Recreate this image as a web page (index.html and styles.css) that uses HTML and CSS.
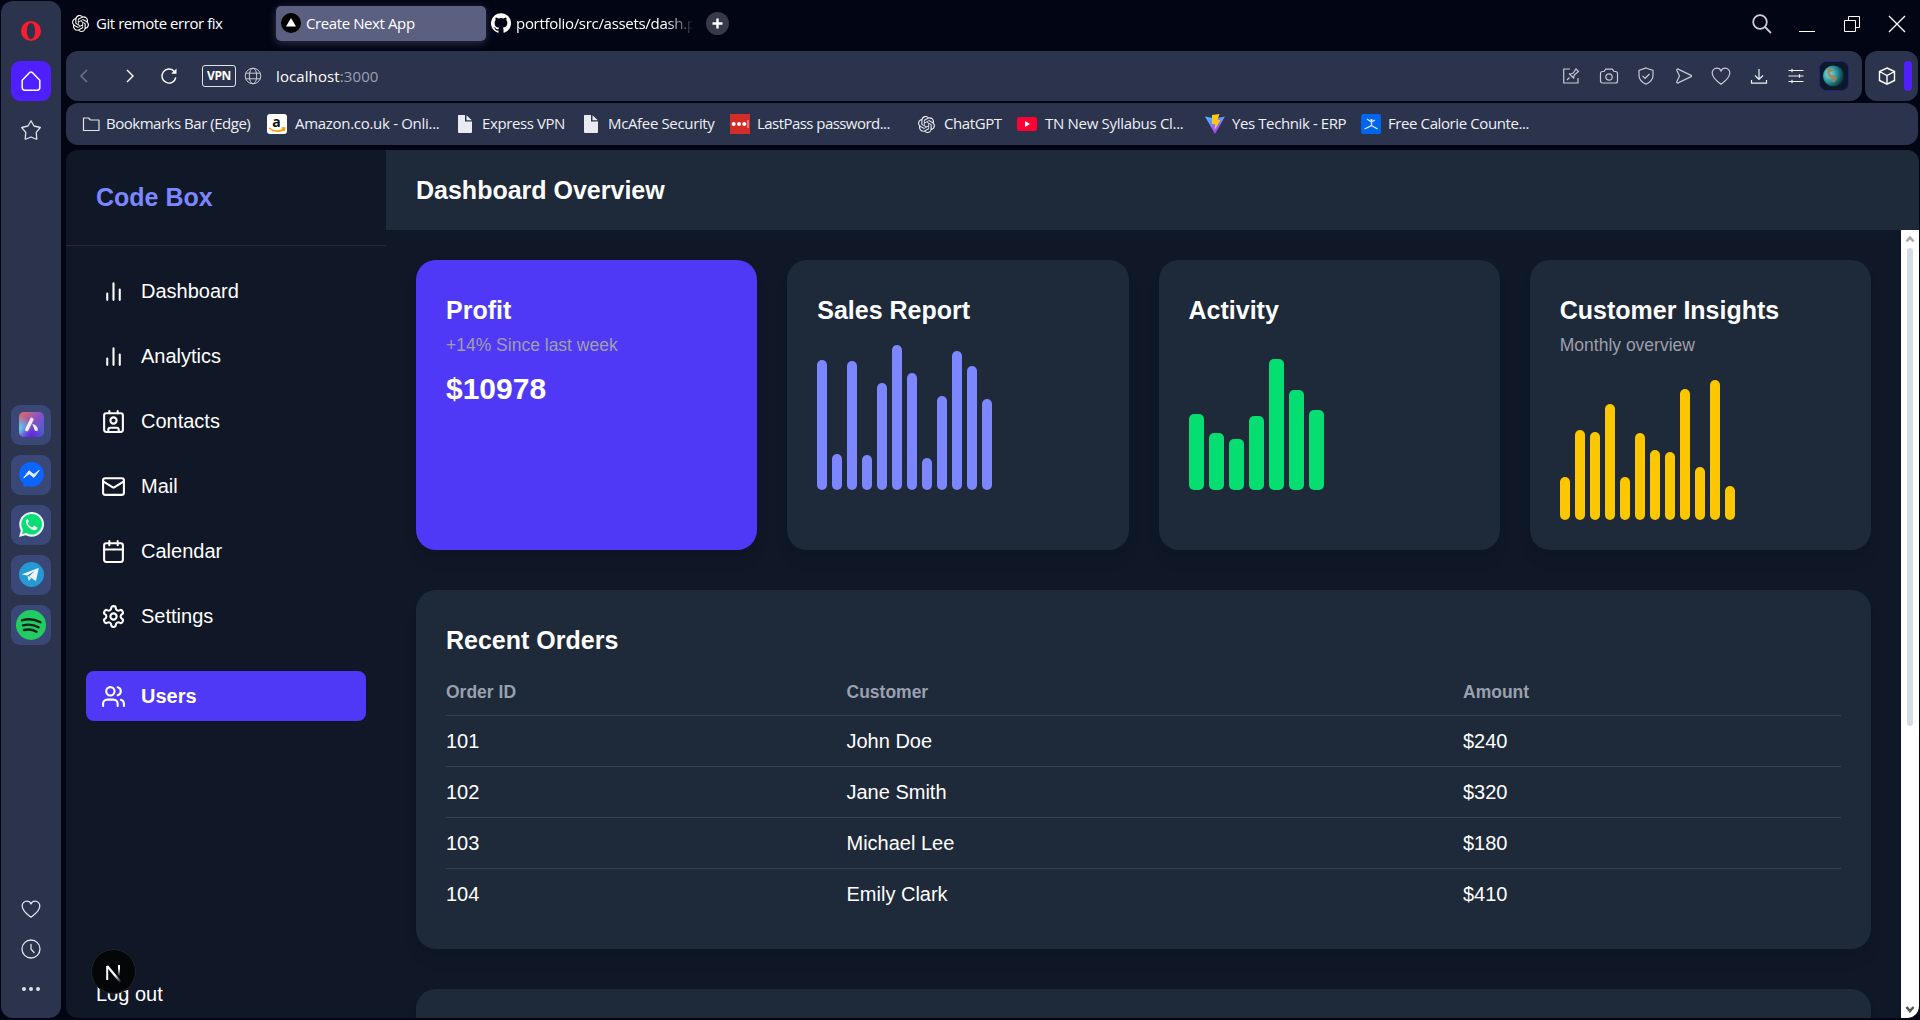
FILE: index.html
```html
<!DOCTYPE html>
<html lang="en">
<head>
<meta charset="utf-8">
<title>Create Next App</title>
<link rel="stylesheet" href="styles.css">
</head>
<body>
<svg width="0" height="0" class="defs">
  <symbol id="gpt" viewBox="0 0 24 24"><path fill="currentColor" d="M22.282 9.821a5.985 5.985 0 0 0-.516-4.91 6.046 6.046 0 0 0-6.51-2.9A6.065 6.065 0 0 0 4.981 4.18a5.985 5.985 0 0 0-3.998 2.9 6.046 6.046 0 0 0 .743 7.097 5.98 5.98 0 0 0 .51 4.911 6.051 6.051 0 0 0 6.515 2.9A5.985 5.985 0 0 0 13.26 24a6.056 6.056 0 0 0 5.772-4.206 5.99 5.99 0 0 0 3.997-2.9 6.056 6.056 0 0 0-.747-7.073zM13.26 22.43a4.476 4.476 0 0 1-2.876-1.04l.141-.081 4.779-2.758a.795.795 0 0 0 .392-.681v-6.737l2.02 1.168a.071.071 0 0 1 .038.052v5.583a4.504 4.504 0 0 1-4.494 4.494zM3.6 18.304a4.47 4.47 0 0 1-.535-3.014l.142.085 4.783 2.759a.771.771 0 0 0 .78 0l5.843-3.369v2.332a.08.08 0 0 1-.033.062L9.74 19.95a4.5 4.5 0 0 1-6.14-1.646zM2.34 7.896a4.485 4.485 0 0 1 2.366-1.973V11.6a.766.766 0 0 0 .388.676l5.815 3.355-2.02 1.168a.076.076 0 0 1-.071 0l-4.83-2.786A4.504 4.504 0 0 1 2.34 7.872zm16.597 3.855-5.833-3.387L15.119 7.2a.076.076 0 0 1 .071 0l4.83 2.791a4.494 4.494 0 0 1-.676 8.105v-5.678a.79.79 0 0 0-.407-.667zm2.01-3.023-.141-.085-4.774-2.782a.776.776 0 0 0-.785 0L9.409 9.23V6.897a.066.066 0 0 1 .028-.061l4.83-2.787a4.5 4.5 0 0 1 6.68 4.66zm-12.64 4.135-2.02-1.164a.08.08 0 0 1-.038-.057V6.075a4.5 4.5 0 0 1 7.375-3.453l-.142.08L8.704 5.46a.795.795 0 0 0-.393.681zm1.097-2.365 2.602-1.5 2.607 1.5v2.999l-2.597 1.5-2.607-1.5z"/></symbol>
  <symbol id="file" viewBox="0 0 16 20"><path fill="#e8ecf2" d="M1.5 1H8v6.500h7V18a1 1 0 0 1-1 1H2a1 1 0 0 1-1-1V1.500zM9.500 1.200 14.800 6.200H9.500z"/></symbol>
  <symbol id="heart" viewBox="0 0 20 20"><path d="M10 18.200C7 15.800 1.200 12.200 1.200 7a4.700 4.700 0 0 1 4.600-4.800C7.900 2.200 9.300 3.300 10 5c.7-1.700 2.100-2.800 4.200-2.800A4.700 4.700 0 0 1 18.800 7c0 5.200-5.800 8.800-8.800 11.200z"/></symbol>
  <symbol id="bars" viewBox="0 0 24 24"><path d="M18 20V10M12 20V4M6 20v-6"/></symbol>
</svg>
<div class="window">
  <aside class="rail">
    <div class="rail-top">
      <svg class="opera" viewBox="0 0 24 24"><path fill="#ff1b2d" fill-rule="evenodd" d="M12 0a12 12 0 1 0 0 24 12 12 0 0 0 0-24zm0 2.300c2.900 0 5 4.100 5 9.700s-2.100 9.700-5 9.700-5-4.100-5-9.700 2.100-9.700 5-9.700z"/></svg>
      <div class="home"><svg class="line" viewBox="0 0 20 20"><path d="M1.200 9.200 8.400 1.800a2.300 2.300 0 0 1 3.200 0l7.200 7.400v7.300a2.700 2.700 0 0 1-2.700 2.700H3.900a2.700 2.700 0 0 1-2.700-2.700z"/></svg></div>
      <svg class="line star" viewBox="0 0 22 22"><path d="m11 1.700 3 5.300 6.300 1.500-4.100 4.900.6 6.600h-1L11 18l-4.800 2h-1l.6-6.600L1.700 8.500 8 7z"/></svg>
    </div>
    <div class="apps">
      <div class="app"><svg viewBox="0 0 25 25"><defs><linearGradient id="ar" x1="0" y1="0" x2="1" y2="1"><stop offset="0" stop-color="#e8705a"/><stop offset=".5" stop-color="#8450c8"/><stop offset="1" stop-color="#3e5fd6"/></linearGradient><radialGradient id="ac" cx="0" cy=".65" r=".5"><stop offset="0" stop-color="#58d4f4"/><stop offset="1" stop-color="#58d4f4" stop-opacity="0"/></radialGradient><radialGradient id="ap" cx=".5" cy="1" r=".5"><stop offset="0" stop-color="#6420e0"/><stop offset="1" stop-color="#6420e0" stop-opacity="0"/></radialGradient></defs><rect width="25" height="25" rx="5" fill="url(#ar)"/><rect width="25" height="25" rx="5" fill="url(#ac)"/><rect width="25" height="25" rx="5" fill="url(#ap)"/><path d="m12.800 7.500-5 10" stroke="#eee" stroke-width="3.600" stroke-linecap="round"/><path d="M13.300 12c3.500.6 5.800 3.700 5.600 5.500-.2 2-2 2-3 .7-1-1.500-1.200-3.500-2.600-6.200z" fill="#eee"/></svg></div>
      <div class="app"><svg viewBox="0 0 25 25"><circle cx="12.500" cy="12.300" r="12.300" fill="#0a66ff"/><path d="M4.500 19v6l6-2z" fill="#0a66ff"/><path d="m4.800 15.800 5.200-7 4.800 3.700 5.400-4.100-5.300 7-4.700-3.600z" fill="#e8ecf5" stroke="#e8ecf5" stroke-linejoin="round"/></svg></div>
      <div class="app"><svg viewBox="0 0 25 25"><path d="M0 25 1.800 18.400A12.400 12.400 0 1 1 6.600 23.200z" fill="#eceff2"/><path d="M3 22 4.100 18A10.300 10.300 0 1 1 7.200 21z" fill="#08dd76"/><path d="M8.800 6.800c-1 .1-2.100 1.400-2 3 .3 3.700 5 8.400 8.600 8.500 1.800 0 3-1.200 3-2.500 0-.6-.3-.8-2.700-1.900-.5-.2-.8-.1-1.200.4-.9 1.200-1 1.200-1.900.8-1.600-.8-2.900-2-3.700-3.700-.2-.4 0-.6.300-1 .7-.8.700-1 .4-1.700-.6-1.500-.7-1.900-.8-1.900z" fill="#eceff2"/></svg></div>
      <div class="app"><svg viewBox="0 0 25 25"><circle cx="12.500" cy="12.500" r="12.500" fill="#2599d4"/><path d="M3 12.300 19.500 6c.2 0 .3.200.2.500l-2.600 12c-.1.400-.5.500-.9.200l-6-4.400 6-5.500-8 4.800-4.900-1z" fill="#f0f4f8"/><path d="m8.500 13.500 1.200 5.400 2.800-2.900z" fill="#e2ebf4"/></svg></div>
      <div class="app"><svg class="big" viewBox="0 0 30 30"><circle cx="15" cy="15" r="15" fill="#22cc62"/><path d="M6 10.300c6-1.700 13-1 18.500 2M7 15.400c5-1.300 11-.7 15.500 1.900M8 20c4.300-1.100 8.600-.6 12.500 1.700" fill="none" stroke="#10241c" stroke-width="2.400" stroke-linecap="round"/></svg></div>
    </div>
    <div class="rail-bottom">
      <svg class="line"><use href="#heart"/></svg>
      <svg class="line" viewBox="0 0 20 20"><circle cx="10" cy="10" r="9"/><path d="M10 5.500V10l3 3.500"/></svg>
      <svg viewBox="0 0 20 20" fill="#dde3ec"><circle cx="3" cy="10" r="2"/><circle cx="10" cy="10" r="2"/><circle cx="17" cy="10" r="2"/></svg>
    </div>
  </aside>
  <div class="main">
    <div class="tabs">
      <div class="tab t1"><svg class="i17"><use href="#gpt"/></svg><span>Git remote error fix</span></div>
      <div class="tab active"><svg class="i20" viewBox="0 0 20 20"><circle cx="10" cy="10" r="10"/><path fill="#fff" d="m10 5 5 8.500H5z"/></svg><span>Create Next App</span></div>
      <div class="tab t3"><svg class="i20" viewBox="0 0 24 24"><path fill="#fff" d="M12 .3a12 12 0 0 0-3.800 23.400c.6.1.8-.3.800-.6v-2c-3.300.7-4-1.600-4-1.600-.6-1.400-1.400-1.800-1.400-1.800-1-.7.1-.7.100-.7 1.200 0 1.900 1.200 1.900 1.200 1 1.800 2.800 1.300 3.500 1 0-.8.400-1.300.7-1.600-2.700-.3-5.500-1.300-5.500-6 0-1.200.5-2.300 1.300-3.100-.2-.4-.6-1.600 0-3.200 0 0 1-.3 3.400 1.200a11.500 11.500 0 0 1 6 0c2.300-1.500 3.300-1.200 3.300-1.200.6 1.600.2 2.800 0 3.200.9.800 1.300 1.900 1.300 3.200 0 4.600-2.800 5.600-5.500 5.900.5.400.9 1 .9 2.200v3.300c0 .3.100.7.800.6A12 12 0 0 0 12 .3"/></svg><span class="fade">portfolio/src/assets/dash.p</span></div>
      <svg class="plus" viewBox="0 0 23 23"><circle cx="11.500" cy="11.500" r="11.500" fill="#363a48"/><path d="M11.500 6.500v10M6.500 11.500h10" stroke="#fff" stroke-width="2.400"/></svg>
      <div class="winctl">
        <svg viewBox="0 0 20 20" fill="none" stroke="#c9cdd6" stroke-width="1.800"><circle cx="8" cy="8" r="6.800"/><path d="m13 13 6 6"/></svg>
        <svg viewBox="0 0 20 20" stroke="#fff"><path d="M2 17.500h16"/></svg>
        <svg viewBox="0 0 20 20" fill="none" stroke="#fff"><path d="M2.500 6.500h11v11h-11zM6.500 6V2.500h11v11H14"/></svg>
        <svg viewBox="0 0 20 20" stroke="#fff" stroke-width="1.300"><path d="m2 2 16 16M18 2 2 18"/></svg>
      </div>
    </div>
    <div class="bars">
      <div class="address">
        <div class="nav">
          <svg class="dim" viewBox="0 0 20 20"><path d="m13 4-6 6 6 6"/></svg>
          <svg viewBox="0 0 20 20"><path d="m7 4 6 6-6 6"/></svg>
          <svg class="reload" viewBox="0 0 20 20"><path d="M16.800 11.500A7 7 0 1 1 15 5.200l1 1"/><path class="tip" d="M17.500 2.500v5.300h-5.300z"/></svg>
        </div>
        <span class="vpn">VPN</span>
        <svg class="globe" viewBox="0 0 18 18"><circle cx="9" cy="9" r="7.800"/><ellipse cx="9" cy="9" rx="3.700" ry="7.800"/><path d="M1.700 6.200h14.600M1.700 11.800h14.600"/></svg>
        <span class="url">localhost<i>:3000</i></span>
        <div class="tools">
          <svg viewBox="0 0 20 20"><path d="M7 3H2.700v14H17v-5M8.500 11.500 6 14M8 7.500l5 5M9 8.300l3-1 3-4.300 2.500 2.500-4 3.300-1 3M7 3h2"/></svg>
          <svg viewBox="0 0 20 20"><path d="M1.500 7.500c0-1.200.7-2 2-2H5l1.700-2.400h6.600L15 5.500h1.500c1.300 0 2 .8 2 2V15c0 1.200-.7 2-2 2h-13c-1.300 0-2-.8-2-2z"/><circle cx="10" cy="11" r="3.200"/></svg>
          <svg viewBox="0 0 20 20"><path d="m10 2 7 2.500v5c0 4-2.800 6.700-7 8.700-4.200-2-7-4.700-7-8.700v-5zM6.500 9.800 9 12.300 13.500 8"/></svg>
          <svg viewBox="0 0 20 20"><path d="M2.800 4.200c-.3-1 .5-1.500 1.300-1.100l13 6.300c.6.300.6.900 0 1.200l-13 6.300c-.8.400-1.600-.1-1.300-1.100L5.500 10z" stroke-linejoin="round"/></svg>
          <svg><use href="#heart"/></svg>
          <svg class="bright" viewBox="0 0 20 20"><path d="M10 3v10M6 9.500l4 4 4-4M2.500 14v3.200h15V14"/></svg>
          <svg class="bright" viewBox="0 0 20 20"><path d="M2.500 4.500h15M2.500 10h15M2.500 15.500h15M6 2.800v3.400M13.500 8.300v3.400M6 13.800v3.400"/></svg>
        </div>
        <svg class="avatar" viewBox="0 0 30 30"><defs><radialGradient id="earth" cx=".3" cy=".4" r=".75"><stop offset="0" stop-color="#8fe3e6"/><stop offset=".5" stop-color="#28939b"/><stop offset="1" stop-color="#03202e"/></radialGradient></defs><rect x=".5" y=".5" width="29" height="29" rx="7" fill="#0b1a28" stroke="#2b1c82"/><circle cx="14.500" cy="15" r="10.500" fill="url(#earth)"/><path d="m9 8 4-.5 1 2.500-3 1.500 1 2 4 1 2 3-3 4-2-1-1-3.500-3-2-1-3.500z" fill="#a88456" opacity=".85"/></svg>
      </div>
      <div class="side"><svg viewBox="0 0 20 20"><path d="m10 2 7.500 3.500v9L10 18.200l-7.500-3.700v-9zM2.500 5.500 10 9.500l7.500-4M10 9.500v8.700"/></svg><b></b></div>
    </div>
    <div class="bookmarks">
      <div class="bm b1"><svg viewBox="0 0 20 20" fill="none" stroke="#dfe4ec" stroke-width="1.200"><path d="M2.500 4h5l2 2h8.500v10.500H2.500z" stroke-linejoin="round"/></svg><span>Bookmarks Bar (Edge)</span></div>
      <div class="bm b2"><svg viewBox="0 0 20 20"><rect width="20" height="20" rx="3" fill="#fff"/><text x="5.200" y="13" class="a">a</text><path d="M2 14c5 4 11 4 15 1M14.500 14l3.200.1-.8 3" fill="none" stroke="#f90" stroke-width="1.600"/></svg><span>Amazon.co.uk - Onli...</span></div>
      <div class="bm b3"><svg><use href="#file"/></svg><span>Express VPN</span></div>
      <div class="bm b4"><svg><use href="#file"/></svg><span>McAfee Security</span></div>
      <div class="bm b5"><svg viewBox="0 0 20 20"><path fill="#d32d27" d="M0 0h20v20H0z"/><g fill="#fff"><circle cx="3.700" cy="10" r="2"/><circle cx="9" cy="10" r="2"/><circle cx="14.300" cy="10" r="2"/><path d="M17.500 6h1v8h-1z" opacity=".7"/></g></svg><span>LastPass password...</span></div>
      <div class="bm b6"><svg><use href="#gpt"/></svg><span>ChatGPT</span></div>
      <div class="bm b7"><svg viewBox="0 0 20 20"><rect x="2" y="3" width="17" height="14" rx="3" fill="#ff0033"/><path fill="#ff0033" d="M0 5.500a2.500 2.500 0 0 1 2.500-2.500h15A2.500 2.500 0 0 1 20 5.500v9a2.500 2.500 0 0 1-2.500 2.500h-15A2.500 2.500 0 0 1 0 14.500z"/><path fill="#fff" d="m8 7 5 3-5 3z"/></svg><span>TN New Syllabus Cl...</span></div>
      <div class="bm b8"><svg viewBox="0 0 20 20"><defs><linearGradient id="v" x2=".4" y2="1"><stop stop-color="#41c5ff"/><stop offset="1" stop-color="#b33cfb"/></linearGradient></defs><path fill="url(#v)" d="M0 2.500 10 20 20 2.500l-10 2z"/><path fill="#ffc61a" d="m7 1 7.500-1-2 6h3L9.500 16l.8-6H7z"/></svg><span>Yes Technik - ERP</span></div>
      <div class="bm b9"><svg viewBox="0 0 20 20"><rect width="20" height="20" rx="2" fill="#0066ee"/><path d="m6 5 4.500 3L14 6M10.500 7.500v4L3.500 15M10.500 11.500 16.500 15" fill="none" stroke="#d8e8ff" stroke-width="1.300"/><circle cx="10.500" cy="6" r="1.100" fill="#fff"/></svg><span>Free Calorie Counte...</span></div>
    </div>
    <div class="page">
      <nav class="sidebar">
        <div class="brand">Code Box</div>
        <div class="menu">
          <a><svg><use href="#bars"/></svg>Dashboard</a>
          <a><svg><use href="#bars"/></svg>Analytics</a>
          <a><svg viewBox="0 0 24 24"><path d="M16 2v2M7 22v-2a2 2 0 0 1 2-2h6a2 2 0 0 1 2 2v2M8 2v2"/><circle cx="12" cy="11" r="3"/><rect x="3" y="4" width="18" height="18" rx="2"/></svg>Contacts</a>
          <a><svg viewBox="0 0 24 24"><rect x="2" y="4" width="20" height="16" rx="2"/><path d="m22 7-8.970 5.700a1.940 1.940 0 0 1-2.060 0L2 7"/></svg>Mail</a>
          <a><svg viewBox="0 0 24 24"><path d="M8 2v4M16 2v4M3 10h18"/><rect x="3" y="4" width="18" height="18" rx="2"/></svg>Calendar</a>
          <a><svg viewBox="0 0 24 24"><path d="M12.220 2h-.44a2 2 0 0 0-2 2v.18a2 2 0 0 1-1 1.730l-.43.25a2 2 0 0 1-2 0l-.15-.08a2 2 0 0 0-2.730.73l-.22.38a2 2 0 0 0 .73 2.730l.15.1a2 2 0 0 1 1 1.720v.51a2 2 0 0 1-1 1.740l-.15.090a2 2 0 0 0-.73 2.730l.22.38a2 2 0 0 0 2.730.73l.15-.08a2 2 0 0 1 2 0l.43.25a2 2 0 0 1 1 1.730V20a2 2 0 0 0 2 2h.44a2 2 0 0 0 2-2v-.18a2 2 0 0 1 1-1.730l.43-.25a2 2 0 0 1 2 0l.15.08a2 2 0 0 0 2.730-.73l.22-.39a2 2 0 0 0-.73-2.730l-.15-.08a2 2 0 0 1-1-1.740v-.5a2 2 0 0 1 1-1.740l.15-.090a2 2 0 0 0 .73-2.730l-.22-.38a2 2 0 0 0-2.730-.73l-.15.08a2 2 0 0 1-2 0l-.43-.25a2 2 0 0 1-1-1.730V4a2 2 0 0 0-2-2z"/><circle cx="12" cy="12" r="3"/></svg>Settings</a>
          <a class="current"><svg viewBox="0 0 24 24"><path d="M16 21v-2a4 4 0 0 0-4-4H6a4 4 0 0 0-4 4v2M22 21v-2a4 4 0 0 0-3-3.870M16 3.130a4 4 0 0 1 0 7.750"/><circle cx="9" cy="7" r="4"/></svg>Users</a>
        </div>
        <div class="logout">Log out
          <svg class="next" viewBox="0 0 45 45"><defs><linearGradient id="n1" x2="0" y2="1"><stop offset=".3" stop-color="#fff"/><stop offset="1" stop-color="#fff" stop-opacity="0"/></linearGradient><linearGradient id="n2" gradientUnits="userSpaceOnUse" x1="22" y1="23" x2="30" y2="33"><stop offset=".3" stop-color="#fff"/><stop offset="1" stop-color="#fff" stop-opacity="0"/></linearGradient></defs><circle cx="22.500" cy="22.500" r="22" fill="#050608" stroke="#222427"/><path d="M16.200 31V17" stroke="#fff" stroke-width="2"/><path d="M16.200 17 29.500 33" stroke="url(#n2)" stroke-width="2.200"/><path fill="url(#n1)" d="M27 16h2v11h-2z"/></svg>
        </div>
      </nav>
      <div class="content">
        <header>Dashboard Overview</header>
        <div class="scroll">
          <div class="body">
            <div class="cards">
              <section class="card profit"><h2>Profit</h2><p>+14% Since last week</p><strong>$10978</strong></section>
              <section class="card"><h2>Sales Report</h2><div class="chart sales"><i style="height:130px"></i><i style="height:36px"></i><i style="height:129px"></i><i style="height:35px"></i><i style="height:107px"></i><i style="height:145px"></i><i style="height:117px"></i><i style="height:32px"></i><i style="height:94px"></i><i style="height:139px"></i><i style="height:124px"></i><i style="height:91px"></i></div></section>
              <section class="card"><h2>Activity</h2><div class="chart activity"><i style="height:76px"></i><i style="height:57px"></i><i style="height:51px"></i><i style="height:74px"></i><i style="height:131px"></i><i style="height:100px"></i><i style="height:80px"></i></div></section>
              <section class="card"><h2>Customer Insights</h2><p>Monthly overview</p><div class="chart insights"><i style="height:43px"></i><i style="height:90px"></i><i style="height:88px"></i><i style="height:116px"></i><i style="height:43px"></i><i style="height:87px"></i><i style="height:70px"></i><i style="height:68px"></i><i style="height:131px"></i><i style="height:53px"></i><i style="height:140px"></i><i style="height:34px"></i></div></section>
            </div>
            <section class="card orders">
              <h2>Recent Orders</h2>
              <table>
                <thead><tr><th class="c1">Order ID</th><th class="c2">Customer</th><th>Amount</th></tr></thead>
                <tbody>
                  <tr><td>101</td><td>John Doe</td><td>$240</td></tr>
                  <tr><td>102</td><td>Jane Smith</td><td>$320</td></tr>
                  <tr><td>103</td><td>Michael Lee</td><td>$180</td></tr>
                  <tr><td>104</td><td>Emily Clark</td><td>$410</td></tr>
                </tbody>
              </table>
            </section>
            <section class="card peek"></section>
          </div>
          <div class="scrollbar">
            <svg viewBox="0 0 18 18"><path d="m5.500 11.500 3.500-4 3.500 4" stroke="#a8a8a8"/></svg>
            <div class="thumb"></div>
            <svg viewBox="0 0 18 18"><path d="m5.500 7 3.500 4 3.500-4" stroke="#555"/></svg>
          </div>
        </div>
      </div>
    </div>
  </div>
</div>
</body>
</html>
```
FILE: styles.css
```css
* { box-sizing: border-box; }
body {
  margin: 0;
  width: 1920px;
  height: 1020px;
  overflow: hidden;
  background: #020514;
  color: #fff;
  font-family: "Open Sans", "Noto Sans", sans-serif;
  font-size: 15px;
}
.defs { position: absolute; }
svg { display: block; flex: none; }
.line { fill: none; stroke: #dde3ec; stroke-width: 1.3; stroke-linejoin: round; stroke-linecap: round; }
.window { display: flex; gap: 5px; height: 1018px; padding: 1px 1px 0; }

/* Browser side rail */
.rail {
  width: 60px;
  height: 1017px;
  border-radius: 12px;
  background: #2c334c;
  display: flex;
  flex-direction: column;
  align-items: center;
  padding: 20px 0 19px;
}
.rail-top { display: flex; flex-direction: column; align-items: center; height: 384px; }
.opera { width: 20px; height: 20px; }
.home { width: 40px; height: 40px; margin: 20px 0 18px; border-radius: 9px; background: #4f1fff; display: grid; place-items: center; }
.home svg { width: 20px; height: 20px; stroke: #fff; stroke-width: 1.5; }
.star { width: 22px; height: 22px; margin-right: 1px; }
.apps { display: flex; flex-direction: column; gap: 10px; flex: 1; }
.app { width: 40px; height: 40px; border-radius: 9px; background: #3a4878; display: grid; place-items: center; }
.app svg { width: 25px; height: 25px; margin-bottom: 1px; }
.app .big { width: 30px; height: 30px; margin: 0; }
.rail-bottom { display: flex; flex-direction: column; gap: 20px; margin-right: 1px; }
.rail-bottom svg { width: 20px; height: 20px; }

/* Tab strip */
.main { flex: 1; min-width: 0; display: flex; flex-direction: column; }
.tabs { height: 50px; display: flex; align-items: flex-start; padding-top: 5px; }
.tab { height: 35px; display: flex; align-items: center; gap: 6px; white-space: nowrap; letter-spacing: -.4px; padding-bottom: 1px; }
.t1 { width: 210px; padding-left: 6px; gap: 7px; letter-spacing: -.45px; }
.active { width: 210px; padding-left: 5px; gap: 5px; border-radius: 5px; background: #5b6080; box-shadow: 0 2px 8px #5b608080; }
.t3 { width: 215px; padding-left: 5px; gap: 5px; letter-spacing: -.3px; }
.fade { -webkit-mask-image: linear-gradient(90deg, #000 150px, transparent 178px); mask-image: linear-gradient(90deg, #000 150px, transparent 178px); }
.i17 { width: 17px; height: 17px; }
.i20 { width: 20px; height: 20px; }
.plus { width: 23px; height: 23px; margin: 6px 0 0 5px; }
.winctl { margin: 8px 12px 0 auto; display: flex; gap: 25px; }
.winctl svg { width: 20px; height: 20px; }

/* Address bar */
.bars { display: flex; gap: 3px; height: 50px; padding-right: 1px; }
.address { flex: 1; display: flex; align-items: center; background: #2c334c; border-radius: 12px; padding: 0 13px 0 8px; }
.nav { display: flex; }
.nav svg, .globe, .tools svg, .side svg { fill: none; stroke: #fff; stroke-width: 1.4; }
.nav svg { width: 20px; height: 20px; margin-right: 26px; }
.nav .dim { stroke: #737a90; }
.nav .reload { margin: 0 23px 0 -7px; }
.tip { fill: #fff; stroke: none; }
.vpn { width: 34px; height: 22px; border: 1px solid #dfe3ea; border-radius: 3px; font-size: 12px; font-weight: 700; line-height: 20px; text-align: center; letter-spacing: -.3px; }
.globe { width: 18px; height: 18px; margin: 0 14px 0 8px; stroke: #c5cad6; stroke-width: 1; }
.url { letter-spacing: .1px; }
.url i { font-style: normal; color: #9aa1b3; }
.tools { display: flex; gap: 17.500px; margin-left: auto; margin-right: 13px; }
.tools svg { width: 20px; height: 20px; stroke: #c5cad6; stroke-width: 1.2; }
.tools .bright { stroke: #eef1f6; }
.avatar { width: 30px; height: 30px; }
.side { width: 53px; border-radius: 12px; background: #2c334c; display: flex; align-items: center; padding-left: 12px; gap: 7px; }
.side svg { width: 20px; height: 20px; }
.side b { width: 8px; height: 30px; border-radius: 4px; background: #4f1fff; }

/* Bookmarks bar */
.bookmarks { height: 42px; margin: 2px 1px 5px 0; border-radius: 12px; background: #2c334c; display: flex; align-items: center; padding-left: 15px; }
.bm { display: flex; align-items: center; gap: 7px; white-space: nowrap; letter-spacing: -.4px; color: #edf0f6; }
.bm svg { width: 20px; height: 20px; }
.bm span { padding-bottom: 3px; }
.b1 { width: 186px; gap: 5px; letter-spacing: -.48px; }
.b2 { width: 188px; gap: 8px; letter-spacing: -.3px; }
.b3 { width: 126px; }
.b4 { width: 149px; letter-spacing: -.35px; }
.b5 { width: 188px; letter-spacing: -.55px; }
.b6 { width: 99px; gap: 9px; }
.b6 svg { width: 17px; height: 17px; }
.b7 { width: 188px; gap: 8px; letter-spacing: -.3px; }
.b8 { width: 156px; }
.bm .a { font: bold 14px "Open Sans", sans-serif; letter-spacing: 0; fill: #111; }
.b2 svg { overflow: visible; }

/* Dashboard */
.page { flex: 1; display: flex; border-radius: 12px; overflow: hidden; background: #101828; font-family: "Liberation Sans", Arial, sans-serif; font-size: 20px; line-height: 30px; }
.sidebar { width: 320px; display: flex; flex-direction: column; background: #101726; }
.brand { height: 96px; padding: 30px; border-bottom: 1px solid #1e2939; color: #7c86ff; font-size: 25px; font-weight: 700; line-height: 35px; }
.menu { flex: 1; display: flex; flex-direction: column; gap: 15px; padding: 20px; }
.menu a { height: 50px; display: flex; align-items: center; gap: 15px; padding: 0 15px; border-radius: 8px; }
.menu svg { width: 25px; height: 25px; fill: none; stroke: #fff; stroke-width: 2; stroke-linecap: round; stroke-linejoin: round; }
.menu .current { margin-top: 15px; background: #4f39f6; font-weight: 700; }
.logout { position: relative; padding: 0 30px 9px; }
.next { position: absolute; left: 25px; top: -30px; width: 45px; height: 45px; }
.content { flex: 1; min-width: 0; display: flex; flex-direction: column; }
header { height: 80px; padding: 23px 30px 22px; background: #1e2939; font-size: 25px; font-weight: 700; line-height: 35px; }
.scroll { flex: 1; min-height: 0; display: flex; }
.body { flex: 1; padding: 30px; overflow: hidden; display: flex; flex-direction: column; gap: 40px; }
.cards { flex: none; display: grid; grid-template-columns: repeat(4, 1fr); gap: 30px; height: 290px; }
.card { border-radius: 20px; background: #1e2939; padding: 33px 30px 30px; box-shadow: 0 12px 18px -4px #00000014, 0 5px 8px -5px #00000014; }
.profit { background: #4f39f6; }
h2 { margin: 0; font-size: 25px; line-height: 35px; font-weight: 700; }
.card p { margin: 5px 0 0; color: #9f9fa9; font-size: 17.500px; line-height: 25px; }
.card strong { display: block; margin-top: 11px; font-size: 30px; line-height: 40px; }
.chart { display: flex; align-items: flex-end; gap: 5px; height: 162px; }
.chart i { width: 10px; border-radius: 5px; }
.sales i { background: #7c86ff; }
.activity i { width: 15px; background: #05df72; }
.insights i { background: #fdc700; }
.orders { flex: none; height: 359px; }
.peek { flex: none; height: 300px; }
table { width: 100%; margin-top: 22px; border-collapse: separate; border-spacing: 0; table-layout: fixed; }
th { text-align: left; padding: 0 0 10px; color: #99a1af; font-size: 17.500px; line-height: 25px; }
.c1 { width: 400.500px; }
.c2 { width: 616.500px; }
td { padding: 10px 0; line-height: 30px; }
th, td { border-bottom: 1px solid #364153; }
tbody tr:last-child td { border-bottom: 0; }
.scrollbar { width: 18px; background: #fff; display: flex; flex-direction: column; align-items: center; }
.scrollbar svg { width: 18px; height: 18px; fill: none; stroke-width: 2.500; }
.thumb { width: 6px; height: 478px; border-radius: 3px; background: #d3dce5; margin-bottom: auto; }
```
